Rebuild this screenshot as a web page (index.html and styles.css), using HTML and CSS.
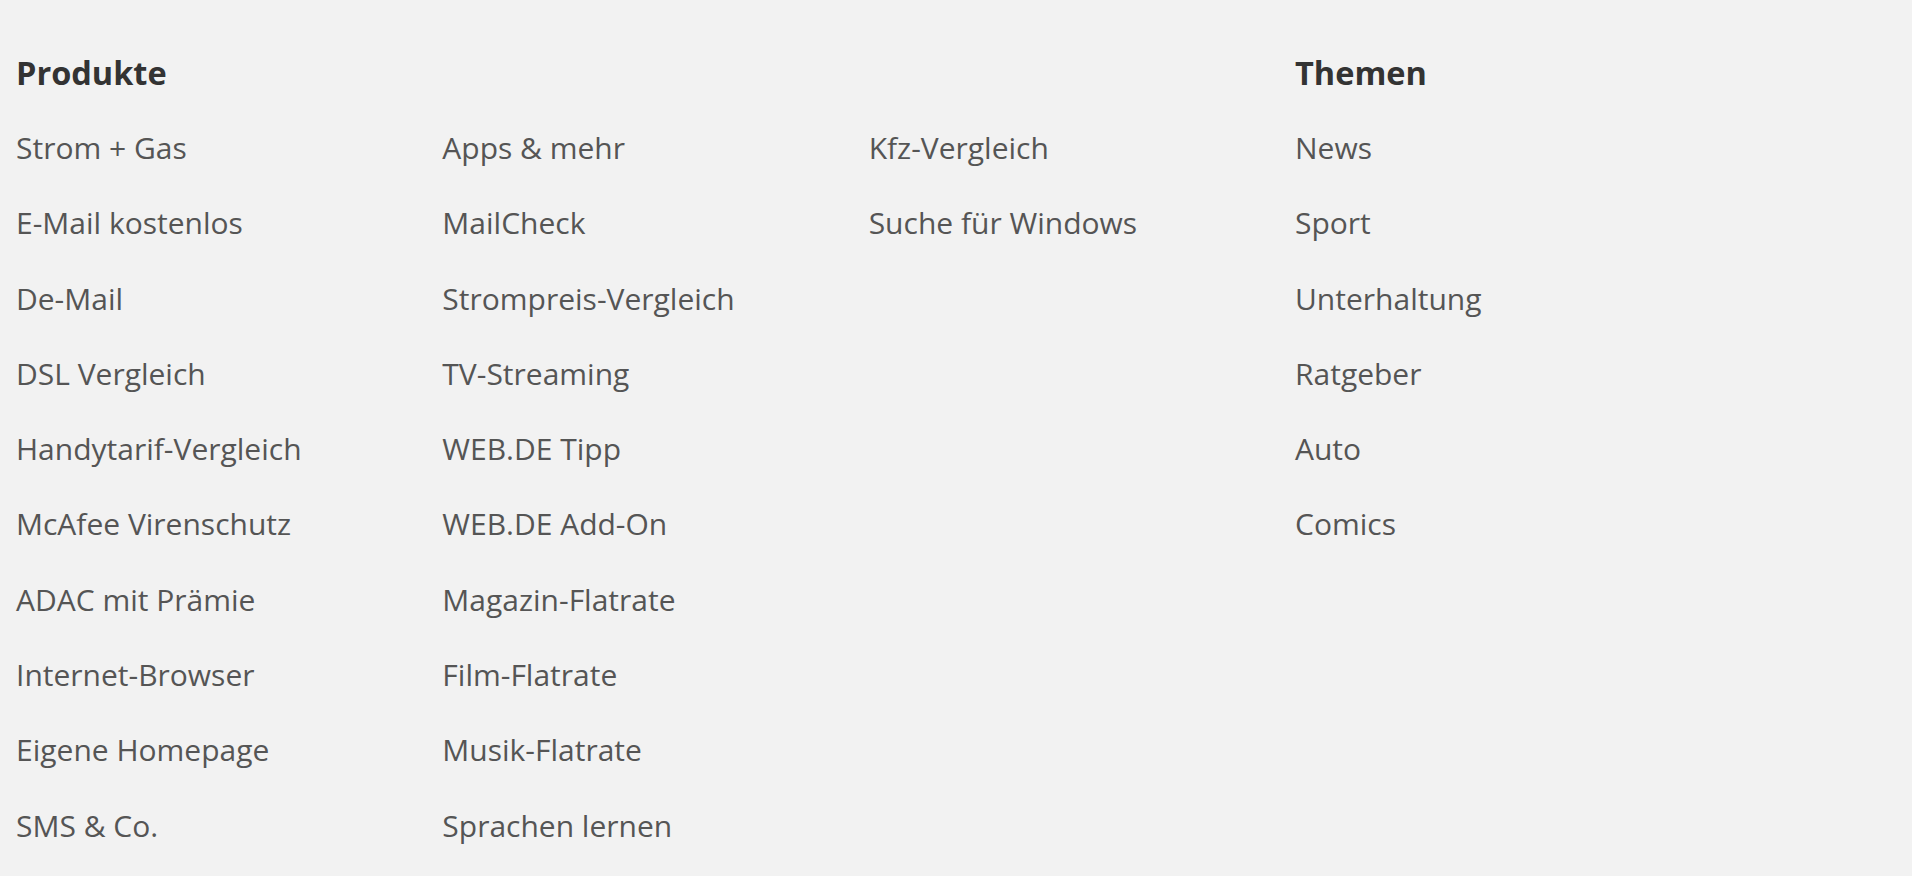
FILE: index.html
```html
<!DOCTYPE html>
<html lang="de">
<head>
<meta charset="utf-8">
<title>Footer</title>
<link rel="stylesheet" href="styles.css">
</head>
<body>
<footer class="footer">
  <section class="group group-products">
    <h2 class="group-title">Produkte</h2>
    <ul class="links">
      <li><a href="#">Strom + Gas</a></li>
      <li><a href="#">E-Mail kostenlos</a></li>
      <li><a href="#">De-Mail</a></li>
      <li><a href="#">DSL Vergleich</a></li>
      <li><a href="#">Handytarif-Vergleich</a></li>
      <li><a href="#">McAfee Virenschutz</a></li>
      <li><a href="#">ADAC mit Prämie</a></li>
      <li><a href="#">Internet-Browser</a></li>
      <li><a href="#">Eigene Homepage</a></li>
      <li><a href="#">SMS &amp; Co.</a></li>
      <li><a href="#">Apps &amp; mehr</a></li>
      <li><a href="#">MailCheck</a></li>
      <li><a href="#">Strompreis-Vergleich</a></li>
      <li><a href="#">TV-Streaming</a></li>
      <li><a href="#">WEB.DE Tipp</a></li>
      <li><a href="#">WEB.DE Add-On</a></li>
      <li><a href="#">Magazin-Flatrate</a></li>
      <li><a href="#">Film-Flatrate</a></li>
      <li><a href="#">Musik-Flatrate</a></li>
      <li><a href="#">Sprachen lernen</a></li>
      <li><a href="#">Kfz-Vergleich</a></li>
      <li><a href="#">Suche für Windows</a></li>
    </ul>
  </section>
  <section class="group group-topics">
    <h2 class="group-title">Themen</h2>
    <ul class="links">
      <li><a href="#">News</a></li>
      <li><a href="#">Sport</a></li>
      <li><a href="#">Unterhaltung</a></li>
      <li><a href="#">Ratgeber</a></li>
      <li><a href="#">Auto</a></li>
      <li><a href="#">Comics</a></li>
    </ul>
  </section>
</footer>
</body>
</html>
```
FILE: styles.css
```css
html, body {
  margin: 0;
  padding: 0;
  background: #f2f2f2;
}

body {
  font-family: "Open Sans", "Noto Sans", sans-serif;
  color: #555555;
}

.footer {
  display: grid;
  grid-template-columns: 1279px 426px;
  padding: 50.5px 0 0 16px;
  height: 876px;
  box-sizing: border-box;
  overflow: hidden;
}

.group-title {
  margin: 0 0 15.5px;
  font-size: 32.5px;
  line-height: 44px;
  font-weight: 700;
  color: #333333;
}

.links {
  list-style: none;
  margin: 0;
  padding: 0;
}

.group-products .links {
  display: grid;
  grid-template-columns: repeat(3, 426.33px);
  grid-template-rows: repeat(10, 75.3px);
  grid-auto-flow: column;
}

.links li {
  font-size: 30px;
  line-height: 75.3px;
  white-space: nowrap;
}

.links a {
  color: #555555;
  text-decoration: none;
}
```
